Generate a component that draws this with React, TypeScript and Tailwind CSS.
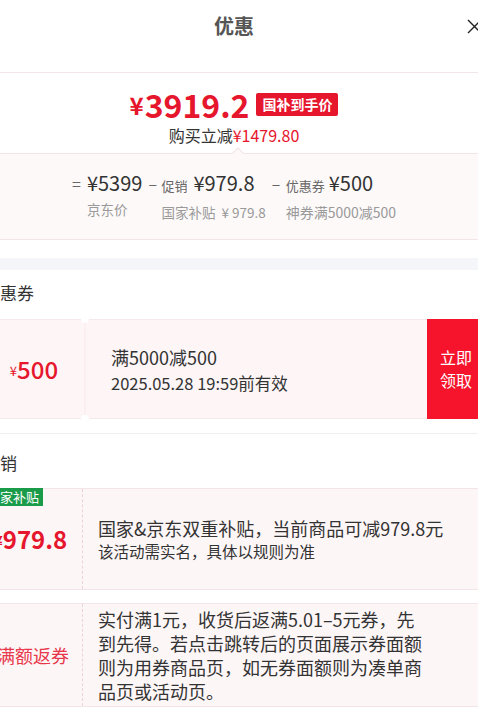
export default function App() {
  return (
    <div className="w-[478px] h-[723px] overflow-hidden bg-white font-['Noto_Sans_CJK_SC','Noto_Sans',sans-serif]">
      <div className="w-[526px] ml-[-29px]">
        {/* header */}
        <div className="relative h-[73px] border-b border-[#f1e5e7]">
          <div className="pt-[12px] text-center text-[20px] leading-[28px] font-bold text-[#555]">优惠</div>
          <svg className="absolute left-[496px] top-[19px]" width="15" height="15" viewBox="0 0 15 15">
            <path d="M1 1L14 14M14 1L1 14" stroke="#222" strokeWidth="1.4" fill="none" />
          </svg>
        </div>

        {/* price */}
        <div className="h-[80px] flex flex-col items-center pt-[14px]">
          <div className="flex items-center text-[#e6162d] h-[34px]">
            <span className="text-[24px] leading-[34px] font-bold mt-[2px] mr-[1px]">¥</span>
            <span className="text-[32px] leading-[34px] font-semibold">3919.2</span>
            <span className="ml-[7px] bg-[#e6162d] text-white text-[14px] leading-[23px] font-bold px-[6px] rounded-[2px]">国补到手价</span>
          </div>
          <div className="mt-[4px] text-[16px] leading-[20px] text-[#333]">
            购买立减<span className="text-[#e6162d]">¥1479.80</span>
          </div>
        </div>

        {/* breakdown */}
        <div className="relative h-[87px] border-y border-[#f3e4e6] bg-[#fdf9f9]">
          <div className="absolute left-[263px] top-[-5px] w-[8px] h-[8px] rotate-45 bg-[#fdf9f9] border-l border-t border-[#f3e4e6]" />
          <div className="flex justify-center gap-[6px] pt-[17px]">
            <div className="flex gap-[7px]">
              <span className="w-[8px] text-[16px] leading-[24px] text-[#666]">=</span>
              <div className="flex flex-col">
                <span className="text-[20px] leading-[24px] text-[#333]">¥5399</span>
                <span className="mt-[5px] text-[13.5px] leading-[18px] text-[#999]">京东价</span>
              </div>
            </div>
            <div className="flex gap-[5px]">
              <span className="w-[8px] text-[16px] leading-[24px] text-[#666]">–</span>
              <div className="flex flex-col">
                <span className="text-[20px] leading-[24px] text-[#333]"><span className="text-[13px] text-[#666] mr-[6px]">促销</span>¥979.8</span>
                <span className="mt-[5px] text-[13.5px] leading-[18px] text-[#999]">国家补贴&nbsp;&nbsp;¥&nbsp;979.8</span>
              </div>
            </div>
            <div className="flex gap-[6px]">
              <span className="w-[8px] text-[16px] leading-[24px] text-[#666]">–</span>
              <div className="flex flex-col">
                <span className="text-[20px] leading-[24px] text-[#333]"><span className="text-[13px] text-[#666] mr-[4px]">优惠券</span>¥500</span>
                <span className="mt-[5px] text-[14px] leading-[18px] text-[#999]">神券满5000减500</span>
              </div>
            </div>
          </div>
        </div>

        <div className="h-[18px]" />
        <div className="h-[12px] bg-[#f5f6f9]" />

        {/* coupons */}
        <div className="px-[12px] pt-[11px] pb-[14px] border-b border-[#efefef]">
          <div className="text-[17px] leading-[24px] text-[#333]">优惠券</div>
          <div className="relative mt-[14px] h-[100px] flex bg-[#fdf5f6] border border-[#f6e9eb]">
            <div className="w-[100px] flex items-center justify-center text-[#e6162d]">
              <span className="text-[13px] leading-[24px] mt-[4px]">¥</span>
              <span className="text-[24px] leading-[30px] font-medium">500</span>
            </div>
            <div className="w-[2px] bg-[#fbeff1]" />
            <div className="absolute left-[97px] top-[-5px] w-[8px] h-[8px] rounded-full bg-white" />
            <div className="absolute left-[97px] bottom-[-5px] w-[8px] h-[8px] rounded-full bg-white" />
            <div className="flex-1 flex flex-col justify-center pl-[25px]">
              <span className="text-[18px] leading-[24px] text-[#333]">满5000减500</span>
              <span className="mt-[3px] text-[16.5px] leading-[22px] text-[#333]">2025.05.28 19:59前有效</span>
            </div>
            <div className="w-[58px] my-[-1px] mr-[-1px] bg-[#f5142b] text-white text-[16px] leading-[23px] flex flex-col items-center justify-center">
              <span>立即</span>
              <span>领取</span>
            </div>
          </div>
        </div>

        {/* promotions */}
        <div className="px-[12px] pt-[17px]">
          <div className="text-[17px] leading-[24px] text-[#333]">促销</div>
          <div className="mt-[13px] h-[102px] flex border border-[#f3e4e7] bg-[#fdf6f7]">
            <div className="relative w-[99px] pr-[6px] border-r border-dashed border-[#ecd3d8] flex items-center justify-center text-[#e6162d]">
              <span className="absolute left-[-1px] top-[-1px] bg-[#1a9b4a] text-white text-[13px] leading-[18px] px-[4px]">国家补贴</span>
              <span className="text-[17px] leading-[30px] font-semibold mt-[3px]">¥</span>
              <span className="text-[24px] leading-[30px] font-semibold">979.8</span>
            </div>
            <div className="flex-1 flex flex-col justify-center pl-[15px] text-[#333]">
              <span className="text-[18px] leading-[24px] whitespace-nowrap">国家&amp;京东双重补贴，当前商品可减979.8元</span>
              <span className="text-[15.5px] leading-[22px]">该活动需实名，具体以规则为准</span>
            </div>
          </div>
          <div className="mt-[13px] h-[104px] flex border border-[#f3e4e7] bg-[#fdf6f7]">
            <div className="w-[99px] border-r border-dashed border-[#ecd3d8] flex items-center justify-center text-[#e8374a] text-[18px] leading-[24px]">
              满额返券
            </div>
            <div className="flex-1 flex flex-col justify-center pl-[15px] text-[#333]">
              <p className="max-w-[332px] text-[18px] leading-[24px]">实付满1元，收货后返满5.01–5元券，先到先得。若点击跳转后的页面展示券面额则为用券商品页，如无券面额则为凑单商品页或活动页。</p>
            </div>
          </div>
        </div>
      </div>
    </div>
  );
}
